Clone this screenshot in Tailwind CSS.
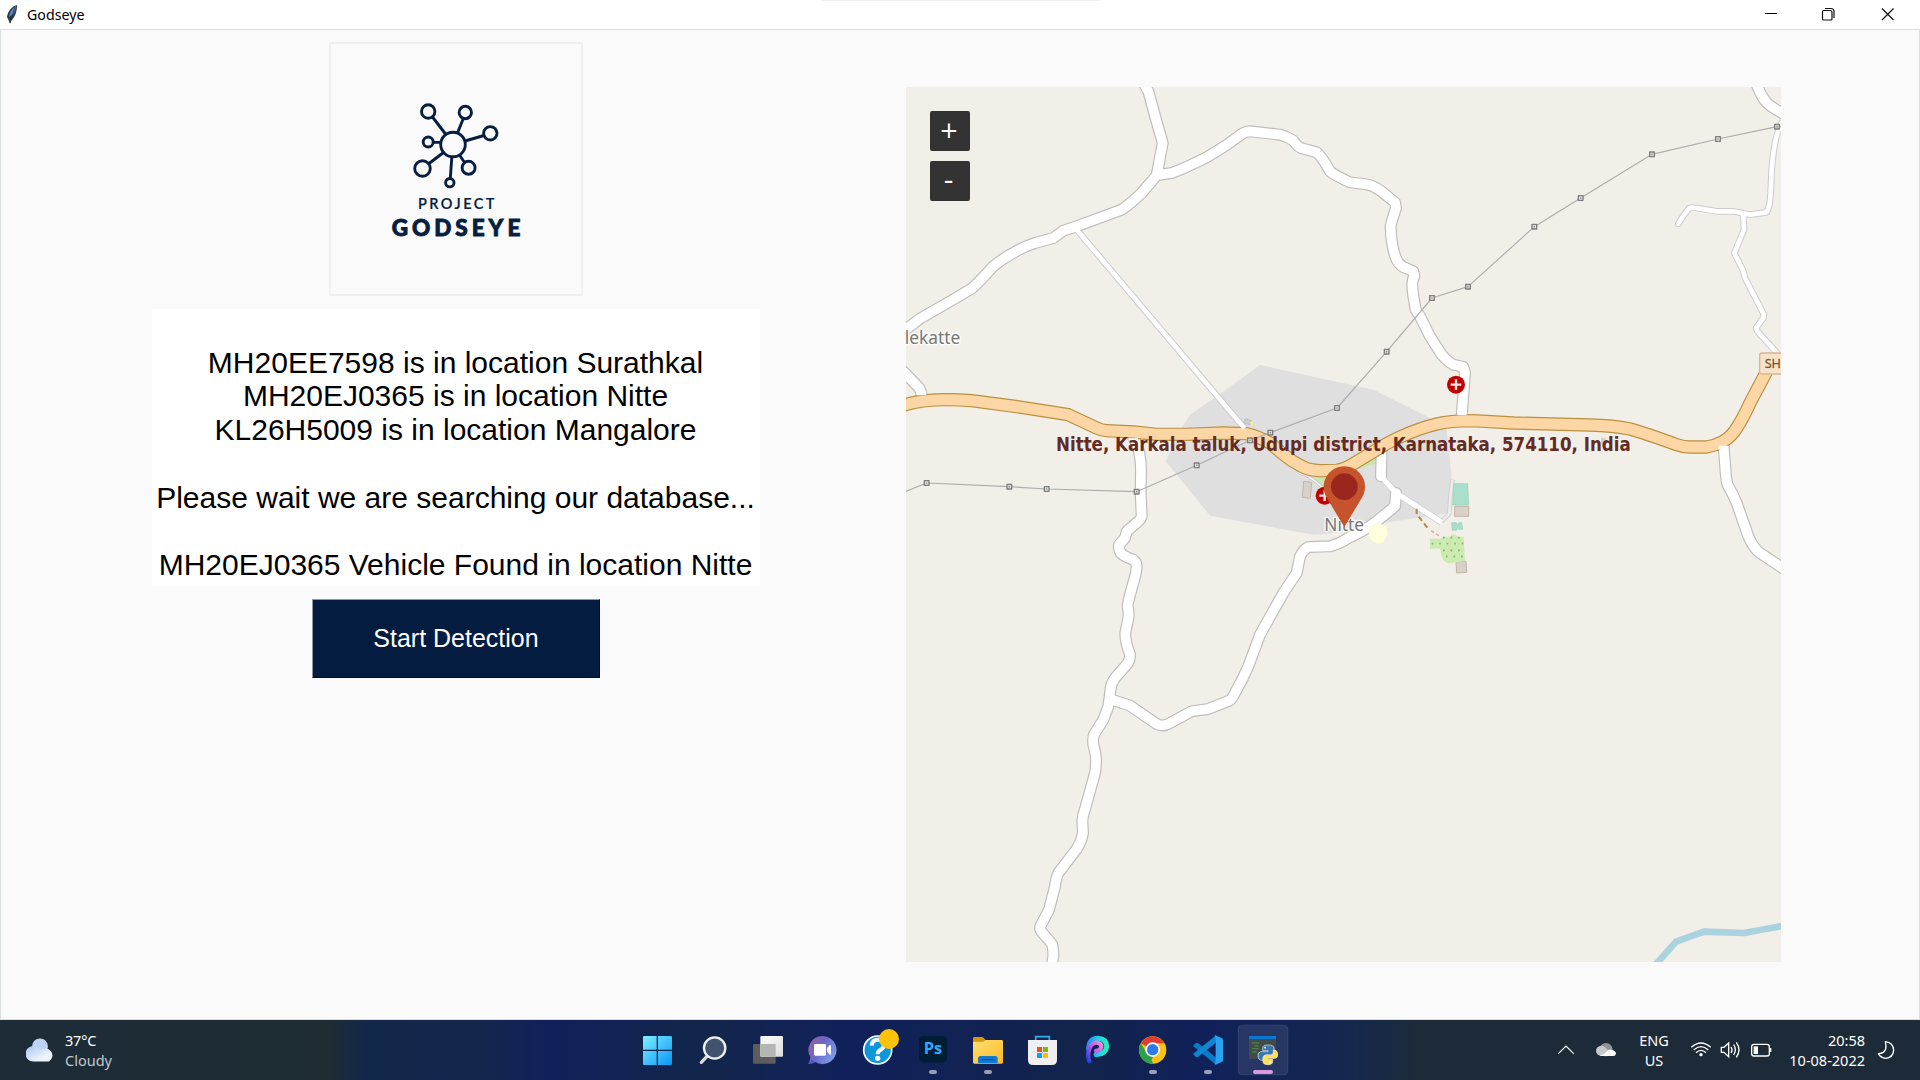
<!DOCTYPE html>
<html lang="en">
<head>
<meta charset="utf-8">
<title>Godseye</title>
<script src="https://cdn.jsdelivr.net/npm/@tailwindcss/browser@4"></script>
</head>
<body class="w-[1920px] h-[1080px] overflow-hidden flex flex-col bg-[#fafafa] font-['Noto_Sans',sans-serif]">

<!-- Title bar -->
<header class="relative h-[30px] shrink-0 bg-white border-b border-[#dcdfdf] flex items-center justify-between">
  <div class="flex items-center pl-1.5">
    <svg class="w-3 h-5" viewBox="0 0 12 20"><path d="M11 0C7 1 2 5 1 12L3 16L4 19L5 16C9 12 11 7 11 0Z" fill="#2d3a48"/><path d="M10 1C7 3 4 6 3 12L6 9L5 12C8 9 10 5 10 1Z" fill="#5c93cf"/><path d="M9 2L4 18" stroke="#1b2733" stroke-width=".8"/></svg>
    <span class="pl-[9px] text-[14.2px] leading-5 text-black">Godseye</span>
  </div>
  <div class="absolute left-[822px] top-0 w-[278px] h-px bg-[#f0f0f0]"></div>
  <svg class="w-[140px] h-[29px]" viewBox="0 0 140 29" fill="none" stroke="#111" stroke-width="1.2"><path d="M43.500 10.500h6.500q2 0 2 2v6.500q0 1-1 1h-7.500q-1 0-1-1v-7.500q0-1 1-1z"/><path d="M45 8.500h6q3 0 3 3v6.500"/><path d="M102 8.500l11.500 11.500M113.500 8.500L102 20"/></svg>
  <svg class="absolute left-[1765px] top-[13px] w-3 h-px" viewBox="0 0 12 1"><path d="M0 .5H12" stroke="#000"/></svg>
</header>

<main class="grow flex border-x border-b border-[#dcdfdf]">
  <section class="w-[905px] pl-[5px] pt-3 flex flex-col items-center">
    <svg class="w-[254px] h-[254px] border-2 border-[#f0f0f0]" viewBox="331 44 250 250">
      <g fill="none" stroke="#061e42" stroke-width="2.9">
        <circle cx="453" cy="144.500" r="12.300"/>
        <circle cx="428.200" cy="111.500" r="6.700"/>
        <circle cx="465.300" cy="112.500" r="6.200"/>
        <circle cx="490.300" cy="133.300" r="6.700"/>
        <circle cx="428.200" cy="142" r="5"/>
        <circle cx="422.500" cy="168.500" r="7.800"/>
        <circle cx="468.600" cy="167.800" r="6.500"/>
        <circle cx="449.800" cy="182.700" r="4.200"/>
        <path d="M432.500 117L445.500 134M463.300 118.500L457.500 133M484 135.500L465 141M433.500 142.400H441M429 163.500L443.500 152.500M464.500 162.500L459.500 155M450.300 178.500L451.800 157"/>
      </g>
      <g fill="#061e42" stroke="#061e42" font-family="Lato, sans-serif">
        <text x="418" y="208.800" font-size="14.500" font-weight="600" stroke-width=".2" textLength="76.500" lengthAdjust="spacing">PROJECT</text>
        <text x="391.800" y="236.300" font-size="22.500" font-weight="900" stroke-width=".9" textLength="128.500" lengthAdjust="spacing">GODSEYE</text>
      </g>
    </svg>

    <p class="mt-[13px] w-[608px] h-[277px] bg-white pt-[36.5px] pr-px text-center whitespace-pre font-['Liberation_Sans',Arial,sans-serif] text-[30px] leading-[33.8px] text-black">MH20EE7598 is in location Surathkal
MH20EJ0365 is in location Nitte
KL26H5009 is in location Mangalore

Please wait we are searching our database...

MH20EJ0365 Vehicle Found in location Nitte</p>

    <button class="mt-[13px] w-[288px] h-[79px] bg-[#041c40] border border-t-[#8d97a5] border-l-[#8d97a5] border-r-[#0a0f18] border-b-[#0a0f18] text-white font-['Liberation_Sans',Arial,sans-serif] text-[25px]">Start Detection</button>
  </section>

  <!-- Map -->
  <section class="relative mt-[57px] w-[875px] h-[875px] overflow-hidden bg-[#f2efe9]">
    <svg class="w-[875px] h-[875px] block" viewBox="18 22 2625 2625" fill="none" stroke-linejoin="round" stroke-linecap="butt">
      <defs>
        <path id="nw" d="M10 755L60 717L150 665L215 627Q235 610 280 560Q310 535 357 510Q380 498 405 490L460 475L490 453L530 440L665 390Q695 370 725 340L770 287L815 280Q850 268 885 250Q920 235 950 215L985 192L1030 160Q1038 155 1050 155L1140 165Q1160 170 1180 183Q1195 205 1210 207L1250 218Q1265 230 1290 275Q1300 285 1350 308L1400 314Q1420 318 1440 332L1485 368L1488 385Q1473 430 1472 440Q1472 470 1478 500Q1483 525 1490 540Q1498 555 1510 562L1540 575L1543 590Q1537 600 1537 610Q1537 630 1540 650L1547 690L1560 710L1590 770L1625 825Q1645 848 1660 855L1690 862L1695 880L1685 1010"/>
        <path id="nn" d="M728 5L745 35Q765 110 788 190L770 287"/>
        <path id="ww" d="M5 870L55 922Q65 935 65 950"/>
        <path id="ss" d="M698 1070Q715 1100 718 1120Q723 1150 723 1170L722 1240L725 1310Q722 1320 715 1325L680 1355L675 1375L657 1395Q655 1410 662 1420Q675 1432 700 1440Q710 1448 710 1460L708 1480L690 1545Q683 1570 683 1580Q686 1595 686 1610L676 1660Q675 1685 690 1725Q690 1745 680 1755L645 1795Q635 1810 633 1820L625 1880L610 1920L582 1965Q578 1975 580 1995Q588 2025 588 2040Q588 2065 585 2080L556 2185Q548 2205 547 2225L549 2260Q545 2285 530 2308L475 2380Q468 2395 465 2420L447 2490L422 2538Q418 2548 424 2555L456 2593Q460 2605 460 2630L455 2660"/>
        <path id="se" d="M635 1860L690 1878L770 1933Q790 1943 810 1930L875 1895L925 1888L990 1862Q998 1855 1010 1830Q1030 1795 1045 1760L1080 1665L1150 1540L1190 1480L1200 1430Q1210 1410 1225 1402L1290 1400Q1320 1392 1345 1375Q1390 1355 1430 1325L1485 1280L1488 1240"/>
        <path id="sf" d="M1445 1110L1443 1190"/>
        <path id="ee" d="M2470 1090L2478 1190Q2480 1210 2485 1220Q2500 1245 2510 1270L2545 1370Q2560 1405 2580 1420Q2610 1440 2655 1470"/>
        <path id="ne" d="M2570 15Q2582 45 2595 63Q2605 78 2655 105"/>
        <path id="thin" d="M530 450L1035 1048M2645 130Q2632 155 2627 180Q2620 210 2615 270L2612 340Q2610 380 2600 398L2550 405L2500 395L2450 395L2395 386Q2375 382 2368 385Q2350 405 2335 432M2530 405L2532 450L2503 520L2530 575L2535 595L2592 705L2590 715L2568 745L2572 755L2640 830"/>
        <path id="lane" d="M1443 1190L1488 1240L1625 1328"/>
        <path id="sh" d="M10 977Q60 960 140 960Q180 960 215 963L365 983L505 1005L590 1045Q605 1052 620 1053L700 1057L770 1064L860 1064L970 1060L1040 1062Q1075 1070 1110 1090L1145 1120Q1175 1145 1205 1160Q1225 1172 1260 1173L1310 1172Q1335 1168 1350 1158L1430 1110Q1460 1090 1500 1072Q1560 1045 1610 1033Q1650 1023 1720 1023L1840 1030L2070 1036Q2140 1038 2190 1048Q2240 1062 2330 1095Q2350 1102 2370 1102L2420 1102Q2445 1098 2470 1085Q2495 1070 2510 1045Q2530 1015 2550 970L2600 875"/>
      </defs>

      <path fill="#dfdfdf" d="M1080 856L1420 930L1600 1020L1640 1050L1657 1210L1650 1300L1450 1330L1290 1362L1240 1365L930 1308L797 1145L845 1045L870 1005L960 943Z"/>
      <path fill="#c8e6ae" d="M1240 1190h70v40h-40zM1370 1165L1428 1132V1152L1385 1165z"/>
      <path stroke="#cfcfcf" stroke-width="14" d="M1625 1325L1648 1302L1652 1240L1658 1200"/>
      <path stroke="#ededeb" stroke-width="8" d="M1625 1325L1648 1302L1652 1240L1658 1200"/>
      <path stroke="#bbb" stroke-width="9" d="M1195 1178Q1235 1190 1265 1222"/>
      <path stroke="#f4f4f4" stroke-width="5" d="M1195 1178Q1235 1190 1265 1222"/>
      <path stroke="#aad3df" stroke-width="20" d="M2262 2660L2328 2586L2412 2556L2532 2560L2650 2538"/>

      <g stroke="#ccc" stroke-width="20"><use href="#thin" stroke-linecap="round"/><use href="#lane"/></g>
      <g stroke="#bdbdbb" stroke-width="36"><use href="#nw"/><use href="#nn"/><use href="#ww"/><use href="#ss"/><use href="#se" stroke-linecap="round"/><use href="#sf" stroke-linecap="round"/><use href="#ee"/><use href="#ne"/></g>
      <g stroke="#fff" stroke-width="14"><use href="#thin" stroke-linecap="round"/><use href="#lane" stroke-width="16"/></g>
      <g stroke="#fff" stroke-width="29"><use href="#nw"/><use href="#nn"/><use href="#ww"/><use href="#ss"/><use href="#se" stroke-linecap="round"/><use href="#sf" stroke-linecap="round"/><use href="#ee"/><use href="#ne"/></g>
      <use href="#sh" stroke="#b9903f" stroke-width="40"/>
      <use href="#sh" stroke="#fcd6a4" stroke-width="33"/>
      <path stroke="#fff" stroke-width="28" d="M65 935v12M1686 990v17M700 1076v12M2470 1098v12"/>
      <path stroke="#fff" stroke-width="13" d="M1022 1032l12 14"/>

      <g fill="#d9d0c9" stroke="#c3b5ab" stroke-width="3">
        <path d="M1211 1205l24 3l-4 48l-24-3z"/>
        <path d="M1664 1280h42v30h-42zM1668 1447l30-2l2 33l-30 2z"/>
        <path d="M1036 1017l18 6l-5 12l-18-6z" fill="#d0d0d0" stroke="#bbb"/>
        <path d="M2103 1074h14v20h-14z" stroke="none"/>
      </g>
      <path fill="#f5f38a" d="M1050 1028l6-5l4 9l-6 5z"/>
      <path fill="#aae0cb" stroke="#8fd0b8" stroke-width="2" d="M1661 1212h42l3 64h-48zM1655 1329h14l4 6l4-6h8l3 20h-12l-4-6l-2 9h-13z"/>
      <path fill="#cdebb0" d="M1590 1377h30l10-6h20q8-14 24 0h17l4 74l-28 3q-14 6-30 0q-14-10-17-41h-30z"/>
      <path stroke="#7fb46e" stroke-width="5" stroke-dasharray="5 17.500" d="M1629 1374h64M1595 1392h95M1629 1412h64M1638 1430h60"/>
      <path stroke="#b58a3e" stroke-width="6" stroke-dasharray="16 10" d="M1550 1287v16L1588 1352"/>
      <path stroke="#f2a49a" stroke-width="5" stroke-dasharray="10 8" d="M1593 1353L1620 1370"/>
      <path fill="#ffffe0" stroke="#fbfbbf" stroke-width="2" d="M1412 1338l22-7l25 9l4 24l-12 22l-16 6l-22-10l-6-20z"/>

      <path stroke="#adadad" stroke-width="3.500" d="M10 1238L80 1210L328 1221L440 1228L710 1236L890 1157L1050 1082L1111 1059L1311 985L1460 816L1596 655L1704 621L1903 441L2042 355L2256 224L2454 178L2631 141L2650 141"/>
      <g id="pylons"></g>

      <g fill="#bf0000"><circle cx="1668" cy="915" r="27"/><circle cx="1274" cy="1248" r="27"/></g>
      <path stroke="#f3e9e5" stroke-width="7" d="M1652 915h32M1668 899v32M1258 1248h32M1274 1232v32"/>

      <path fill="#f7e3cb" stroke="#d6b78e" stroke-width="4" d="M2660 820H2586q-7 0-7 7v49q0 7 7 7H2660z"/>
      <text x="2594" y="866" font-family="Noto Sans" font-size="38" fill="#7a5522" stroke="#7a5522" stroke-width=".8">SH</text>
      <g font-family="Noto Sans" font-size="52" fill="#777" stroke="#fff" stroke-opacity=".75" stroke-width="9" paint-order="stroke">
        <text x="14" y="794" textLength="167" lengthAdjust="spacingAndGlyphs">lekatte</text>
        <text x="1273" y="1354" textLength="119" lengthAdjust="spacingAndGlyphs">Nitte</text>
      </g>

      <path fill="#c5542d" d="M1333 1342L1279 1252A62 62 0 1 1 1387 1252Z"/>
      <circle cx="1333" cy="1221" r="40" fill="#9b261e"/>
      <text x="1330" y="1113" text-anchor="middle" font-family="DejaVu Sans Condensed, DejaVu Sans" font-stretch="condensed" font-weight="700" font-size="56" fill="#652a22" textLength="1724" lengthAdjust="spacingAndGlyphs">Nitte, Karkala taluk, Udupi district, Karnataka, 574110, India</text>
    </svg>
    <div class="absolute left-6 top-6 flex flex-col gap-2.5 font-['DejaVu_Sans',sans-serif] text-white">
      <button class="size-10 rounded-xs bg-[#333] text-[23px] leading-none pb-px pr-0.5">+</button>
      <button class="size-10 rounded-xs bg-[#333] text-[27px] leading-none pb-1 pr-[3px]">-</button>
    </div>
  </section>
</main>

<!-- Taskbar -->
<footer class="h-[60px] shrink-0 flex text-white bg-[linear-gradient(90deg,#1d2c37_0px,#1f2c34_330px,#12284a_365px,#13274c_480px,#10215a_550px,#12264b_700px,#10215a_850px,#12234c_1080px,#10215a_1200px,#142750_1340px,#1d2b38_1420px,#1d2b38_1920px)]">
  <div class="w-[630px] flex pl-[26px]">
    <svg class="w-[30px] h-6 mt-[18px]" viewBox="0 0 30 24"><defs><linearGradient id="cl" x1="0" y1="0" x2="1" y2="1"><stop stop-color="#a9c6f3"/><stop offset=".7" stop-color="#eef3fb"/></linearGradient></defs><circle cx="14" cy="8.500" r="8" fill="#bcd2f7"/><path d="M7 8a7.500 7.500 0 0 1 7.500 4.500A7 7 0 1 1 23 23.500H7.500A7.500 7.500 0 0 1 7 8z" fill="url(#cl)"/></svg>
    <div class="pl-[9px] pt-[10px] text-[14.500px] leading-5"><div class="tracking-[-0.2px]">37°C</div><div class="text-[#c3c8cc]">Cloudy</div></div>
  </div>
  <nav class="flex w-[660px]">
    <svg class="w-[55px] h-[60px]" viewBox="0 15 165 180"><defs><linearGradient id="wn" x1="0" y1="0" x2="1" y2="1"><stop stop-color="#7df0ff"/><stop offset="1" stop-color="#0a94f5"/></linearGradient></defs><path fill="url(#wn)" d="M42 63H80V104H39V66q0-3 3-3zM84 63H123q3 0 3 3V104H84zM39 108H80V150H42q-3 0-3-3zM84 108H126V147q0 3-3 3H84z"/></svg>
    <svg class="w-[55px] h-[60px]" viewBox="165 15 165 180"><path d="M231 124L214 142" stroke="#d9d9d9" stroke-width="10" stroke-linecap="round"/><circle cx="254" cy="99" r="32" fill="#43526f" stroke="#f1f1f1" stroke-width="7"/></svg>
    <svg class="w-[55px] h-[60px]" viewBox="330 15 165 180"><defs><linearGradient id="tv" x2="1" y2="1"><stop stop-color="#fff"/><stop offset="1" stop-color="#dcdcdc"/></linearGradient></defs><rect x="369" y="87" width="68" height="59" rx="3" fill="#5c5c5c"/><rect x="391" y="63" width="68" height="62" rx="3" fill="url(#tv)"/><path d="M391 87h46v38h-46z" fill="#b5b5b5"/></svg>
    <svg class="w-[55px] h-[60px]" viewBox="495 15 165 180"><defs><linearGradient id="tm" x1="0" y1="0" x2="1" y2=".6"><stop stop-color="#9b6099"/><stop offset=".5" stop-color="#6a67c8"/><stop offset="1" stop-color="#7a9be8"/></linearGradient></defs><path fill="url(#tm)" d="M578 63a42 42 0 1 1-22 78q-10 6-21 5q6-10 6-20a42 42 0 0 1 37-63z"/><path fill="#5655c4" d="M545 133a42 42 0 0 0 70-10a42 42 0 0 1-59 18q-10 6-21 5q6-5 10-13z"/><rect x="552" y="87" width="36" height="35" rx="4" fill="#fff"/><path d="M591 99l9-9q3-1 3 2v25q0 3-3 2l-9-9z" fill="#fff"/></svg>
    <svg class="w-[55px] h-[60px]" viewBox="660 15 165 180"><circle cx="743" cy="105" r="42" fill="#0c97d8" stroke="#fff" stroke-width="5"/><path d="M725 92q1-18 19-18q18 1 18 16q0 9-11 15q-8 4-8 13" fill="none" stroke="#fff" stroke-width="12"/><circle cx="743" cy="130" r="8" fill="#fff"/><circle cx="777" cy="72" r="30" fill="#ffc20a"/></svg>
    <svg class="w-[55px] h-[60px]" viewBox="825 15 165 180"><rect x="867" y="63" width="84" height="79" rx="14" fill="#001d33"/><text x="881" y="117" font-family="Open Sans" font-weight="700" font-size="48" fill="#31a8ff" textLength="55" lengthAdjust="spacingAndGlyphs">Ps</text><rect x="897" y="165" width="24" height="12" rx="6" fill="#9a9fb8"/></svg>
    <svg class="w-[55px] h-[60px]" viewBox="0 15 165 180"><defs><linearGradient id="fo" x2="1" y2="1"><stop stop-color="#ffdf73"/><stop offset="1" stop-color="#fdbb22"/></linearGradient></defs><path d="M39 70q0-4 4-4h22q4 0 7 4l6 6v12H39z" fill="#dd9408"/><path d="M39 80h30l8-5h48q4 0 4 4v63q0 4-4 4H43q-4 0-4-4z" fill="url(#fo)"/><path d="M54 144v-13q0-8 8-8h43q8 0 8 8v13z" fill="#1478cf"/><path d="M65 134h37" stroke="#0a4f93" stroke-width="3"/><rect x="72" y="165" width="24" height="12" rx="6" fill="#9a9fb8"/></svg>
    <svg class="w-[55px] h-[60px]" viewBox="165 15 165 180"><path d="M227 80V65h41v15" fill="none" stroke="#2fb1ec" stroke-width="5"/><path d="M204 75h87v60q0 15-15 15h-57q-15 0-15-15z" fill="#efefef"/><path d="M231 96h15v15h-15z" fill="#f25022"/><path d="M249 96h15v15h-15z" fill="#7fba00"/><path d="M231 114h15v15h-15z" fill="#00a4ef"/><path d="M249 114h15v15h-15z" fill="#ffb900"/></svg>
    <svg class="w-[55px] h-[60px]" viewBox="330 15 165 180"><defs><linearGradient id="pa" x1="0" y1="0" x2="1" y2="0"><stop stop-color="#2d8df0"/><stop offset=".6" stop-color="#1fd6e4"/><stop offset="1" stop-color="#20f0c0"/></linearGradient><linearGradient id="pb" x1="1" y1="0" x2="0" y2="1"><stop stop-color="#f08fd8"/><stop offset=".5" stop-color="#b45be8"/><stop offset="1" stop-color="#2440e0"/></linearGradient></defs><path fill="none" stroke="url(#pa)" stroke-width="15" stroke-linecap="round" d="M386 100Q388 70 414 70Q440 72 440 95Q438 117 408 119"/><path fill="none" stroke="url(#pb)" stroke-width="13" stroke-linecap="round" d="M388 139Q380 118 390 96Q398 82 412 83Q425 86 424 96Q421 106 408 108"/></svg>
    <svg class="w-[55px] h-[60px]" viewBox="495 15 165 180"><circle cx="578" cy="105" r="41" fill="#fbc116"/><path d="M578 105L542.500 84.500A41 41 0 0 1 613.500 84.500H578z" fill="#e33b2e"/><path d="M542.500 84.500L562 117L580 125L568 145A41 41 0 0 1 542.500 84.500z" fill="#2da04b"/><path d="M562 115L580 145.500H572L556 120z" fill="#2da04b"/><circle cx="578" cy="104" r="22" fill="#fff"/><circle cx="578" cy="104" r="17" fill="#3079ec"/><rect x="567" y="165" width="24" height="12" rx="6" fill="#9a9fb8"/></svg>
    <svg class="w-[55px] h-[60px]" viewBox="660 15 165 180"><path d="M699 93l8-8q4-3 8 0l54 43v22z" fill="#0a7bc8"/><path d="M699 117l8 8q4 3 8 0l54-43V60z" fill="#0f86d3"/><path d="M764 60l21 9q4 2 4 6v60q0 4-4 6l-21 9l3-12V72z" fill="#27a3f1"/><rect x="732" y="165" width="24" height="12" rx="6" fill="#9a9fb8"/></svg>
    <svg class="w-[55px] h-[60px]" viewBox="825 15 165 180"><rect x="834.500" y="30.500" width="149" height="149" rx="12" fill="#fff" fill-opacity=".09" stroke="#fff" stroke-opacity=".1" stroke-width="3"/><path d="M867 63h81v69h-81z" fill="#444a4c"/><path d="M867 63h81v9h-81z" fill="#0b78d0"/><path d="M876 84h22M884 93h12M876 101h20M876 111h16" stroke="#3f9a41" stroke-width="3"/><path d="M923 90q-15 0-15 9v8h16v3h-22q-9 2-8 13q1 13 11 13h5v-8q0-9 10-9h14q8 0 8-8v-12q0-9-19-9z" fill="#3a78ab" stroke="#dfe8f0" stroke-width="2"/><path d="M924 149q14 0 14-9v-7h-15v-3h22q9-1 8-13q-1-11-9-12h-4v7q0 9-9 9h-13q-9 0-9 9v10q0 9 15 9z" fill="#ffdf57" stroke="#f3efd6" stroke-width="2"/><circle cx="915" cy="98" r="2.500" fill="#fff"/><circle cx="931" cy="141" r="2.500" fill="#fff"/><rect x="879" y="165" width="60" height="12" rx="6" fill="#d99be0"/></svg>
  </nav>
  <div class="w-[630px] flex justify-end">
    <svg class="w-[100px] h-[60px]" viewBox="0 15 300 180"><path d="M85 116L108 93L131 116" fill="none" stroke="#fff" stroke-width="3.500"/><circle cx="228" cy="104" r="20" fill="#8d9499"/><path d="M198 108a16 16 0 0 1 27-11l24 20-5 5h-32a14 14 0 0 1-14-14z" fill="#c5c9cb"/><path d="M208 122q14-3 22-12q6-8 16-6q12 4 12 12q-1 7-9 7h-36z" fill="#fff"/></svg>
    <div class="w-[48px] pt-[10px] text-center text-[14.500px] leading-5">ENG<br>US</div>
    <svg class="w-[97px] h-[60px]" viewBox="444 15 291 180" fill="none" stroke="#fff" stroke-width="4"><path d="M484 97q29-26 58 0M491 105q22-20 44 0M498 113q15-14 30 0"/><circle cx="513" cy="119" r="5" fill="#fff" stroke="none"/><path d="M574 97h8l14-13v41l-14-13h-8z"/><path d="M603 96q6 9 0 18M611 89q10 15 0 31M619 82q16 22 0 45"/><rect x="665" y="88" width="53" height="35" rx="7"/><path d="M721 99v12" stroke-width="6"/><path d="M671 94h13v23h-13z" fill="#fff" stroke="none"/></svg>
    <div class="w-[90px] pt-[10px] text-right text-[14.500px] leading-5">20:58<br>10-08-2022</div>
    <svg class="w-[55px] h-[60px]" viewBox="1005 15 165 180"><path d="M1066 80q24 3 25 26q-2 22-24 24q-15-1-22-14q18-1 22-14q2-9-1-22z" fill="none" stroke="#fff" stroke-width="4" stroke-linejoin="round"/></svg>
  </div>
</footer>

<script>
  const pylons = [[80,1210],[328,1221],[440,1228],[710,1236],[890,1157],[1050,1082],[1111,1059],[1311,985],[1460,816],[1596,655],[1704,621],[1903,441],[2042,355],[2256,224],[2454,178],[2631,141]];
  document.getElementById('pylons').innerHTML = pylons.map(([x, y]) =>
    `<rect x="${x - 7}" y="${y - 7}" width="14" height="14" fill="#e4e2de" stroke="#7d7d7d" stroke-width="4"/><circle cx="${x}" cy="${y}" r="2.500" fill="#8a8a8a"/>`).join('');
</script>
</body>
</html>
